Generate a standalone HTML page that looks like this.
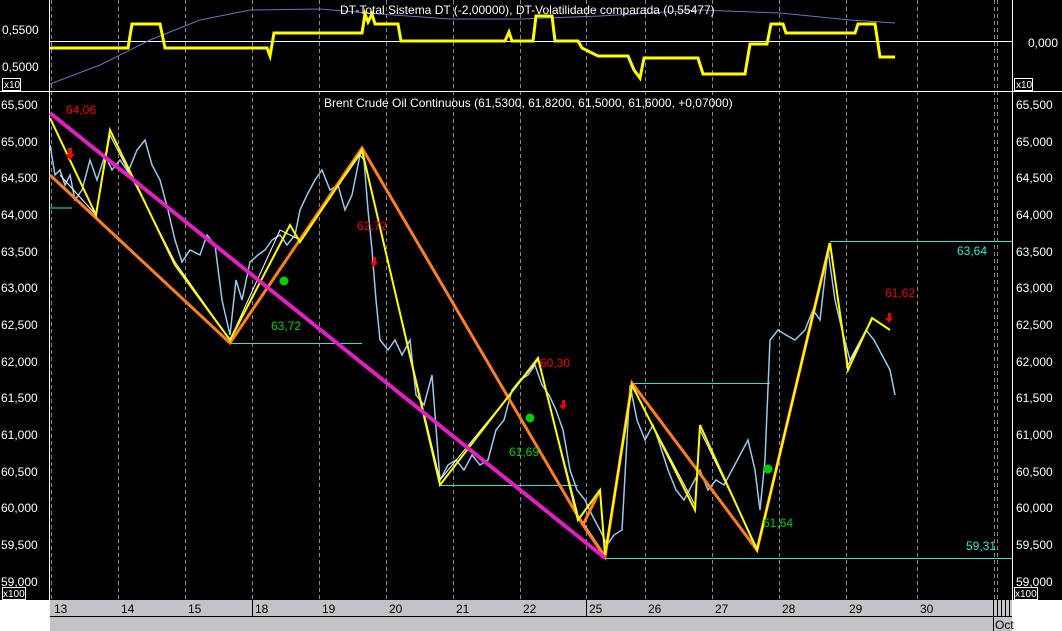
<!DOCTYPE html><html><head><meta charset="utf-8"><style>
body{margin:0;background:#000;width:1062px;height:631px;overflow:hidden;font-family:"Liberation Sans",sans-serif}
svg{display:block}
svg text{font-family:"Liberation Sans",sans-serif;font-size:12px}
</style></head><body>
<svg width="1062" height="631" viewBox="0 0 1062 631" xmlns="http://www.w3.org/2000/svg">
<rect width="1062" height="631" fill="#000"/>
<g stroke="#888" stroke-dasharray="4,3" stroke-width="1">
<line x1="51.5" y1="0" x2="51.5" y2="600"/><line x1="118.5" y1="0" x2="118.5" y2="600"/><line x1="185.5" y1="0" x2="185.5" y2="600"/><line x1="252.5" y1="0" x2="252.5" y2="600"/><line x1="319.5" y1="0" x2="319.5" y2="600"/><line x1="386.5" y1="0" x2="386.5" y2="600"/><line x1="453.5" y1="0" x2="453.5" y2="600"/><line x1="520.5" y1="0" x2="520.5" y2="600"/><line x1="586.5" y1="0" x2="586.5" y2="600"/><line x1="645.5" y1="0" x2="645.5" y2="600"/><line x1="712.5" y1="0" x2="712.5" y2="600"/><line x1="779.5" y1="0" x2="779.5" y2="600"/><line x1="846.5" y1="0" x2="846.5" y2="600"/><line x1="917.5" y1="0" x2="917.5" y2="600"/><line x1="994.5" y1="0" x2="994.5" y2="600"/><line x1="997.5" y1="0" x2="997.5" y2="600"/>
</g>
<g stroke="#fff" stroke-width="1">
<line x1="49.5" y1="0" x2="49.5" y2="600"/><line x1="1012.5" y1="0" x2="1012.5" y2="600"/>
<line x1="0" y1="91.5" x2="1062" y2="91.5"/>
<line x1="50" y1="41.5" x2="1012" y2="41.5"/>
</g>
<polyline fill="none" stroke="#7070c0" stroke-width="1" points="50,84 100,65 150,40 200,20 250,10 320,9 380,14 450,19 520,19 600,16 700,10 780,13 850,20 895,23"/>
<polyline fill="none" stroke="#ff0" stroke-width="3" points="50,48 128,48 132,24 160,24 165,48 267,48 270,56 274,33 362,33 365,14 368,22 372,14 375,24 398,24 401,41 505,41 509,32 512,41 533,41 536,16 552,16 555,41 578,41 582,48 598,56 628,56 634,70 640,78 644,58 698,58 703,74 745,74 750,44 767,44 771,24 783,24 786,33 855,33 858,24 875,24 880,57 895,57"/>
<text x="340" y="14" fill="#fff">DT-Total Sistema DT (-2,00000), DT-Volatilidade comparada (0,55477)</text>
<g stroke="#40e0d0" stroke-width="1">
<line x1="50" y1="208" x2="72" y2="208"/><line x1="230" y1="343.5" x2="362" y2="343.5"/><line x1="440" y1="485.5" x2="578" y2="485.5"/><line x1="605" y1="558.5" x2="1012" y2="558.5"/><line x1="632" y1="383.5" x2="770" y2="383.5"/><line x1="830" y1="241.5" x2="1012" y2="241.5"/>
</g>
<polyline fill="none" stroke="#9cc8e8" stroke-width="1.5" points="50,145 55,175 60,170 65,185 70,175 75,200 82,190 90,160 97,180 105,155 112,170 120,160 128,172 137,150 145,140 152,165 160,180 168,210 175,240 182,262 190,250 200,255 207,235 215,245 222,300 230,335 236,280 242,300 250,262 258,255 265,250 272,240 280,235 287,245 295,235 300,210 307,195 315,180 322,170 330,190 338,185 345,210 352,195 360,155 364,160 368,210 372,250 376,300 380,340 388,350 395,340 402,355 410,340 416,395 424,405 432,375 440,480 448,465 456,460 464,470 472,455 480,465 488,460 496,430 504,420 512,390 520,380 528,375 535,365 542,385 549,395 556,410 563,430 570,470 577,490 585,500 592,515 600,530 607,545 614,535 622,530 630,385 637,420 645,440 653,425 660,445 668,470 676,490 684,500 692,485 700,470 708,490 716,480 724,485 732,470 740,455 748,440 755,470 760,510 765,460 770,340 778,330 786,335 795,340 805,330 813,310 820,320 828,250 835,300 842,330 850,360 858,345 866,330 874,340 882,355 890,370 895,395"/>
<polyline fill="none" stroke="#fff" stroke-width="1" points="60,175 96,215 110,135 175,262 230,340 280,230 300,240 362,152 440,480 538,360 578,515 605,555 632,386 695,505 700,430 757,548 830,245 848,365 872,320"/>
<polyline fill="none" stroke="#ff7f27" stroke-width="3" points="50,175 230,343 362,148 583,525 605,557 632,383 757,550 830,243"/>
<polyline fill="none" stroke="#ff7f27" stroke-width="3" points="583,525 600,490"/>
<polyline fill="none" stroke="#ff0" stroke-width="2" points="50,118 96,215 110,130 175,265 230,340 290,225 300,242 362,150 440,485 538,358 578,520 600,490 605,555 632,385 695,510 700,425 757,550 830,243 848,370 872,318 890,330"/>
<line x1="50" y1="113" x2="605" y2="558" stroke="#e020c0" stroke-width="4"/>
<text x="324" y="107" fill="#fff">Brent Crude Oil Continuous (61,5300, 61,8200, 61,5000, 61,6000, +0,07000)</text>
<text x="66" y="114" fill="#e00">64,06</text>
<text x="271" y="330" fill="#0c0">63,72</text>
<text x="357" y="230" fill="#e00">62,72</text>
<text x="540" y="367" fill="#e00">60,30</text>
<text x="509" y="456" fill="#0c0">61,69</text>
<text x="763" y="527" fill="#0c0">61,64</text>
<text x="957" y="255" fill="#40e0d0">63,64</text>
<text x="885" y="297" fill="#e00">61,62</text>
<text x="966" y="550" fill="#40e0d0">59,31</text>
<g fill="#e00"><path d="M68,148h4v6h3l-5,6l-5,-6h3z"/><path d="M373,257h3v5h2l-4,5l-4,-5h3z"/><path d="M562,400h3v5h2l-4,5l-4,-5h3z"/><path d="M888,313h3v5h2l-4,5l-4,-5h3z"/></g>
<g fill="#0c0"><circle cx="284" cy="281" r="4.5"/><circle cx="530" cy="418" r="4.5"/><circle cx="768" cy="469" r="4.5"/></g>
<g fill="#fff">
<text x="2" y="34">0,5500</text><text x="2" y="71">0,5000</text>
<text x="1028" y="47">0,000</text>
<text x="1" y="109">65,500</text><text x="1" y="146">65,000</text><text x="1" y="182">64,500</text><text x="1" y="219">64,000</text><text x="1" y="256">63,500</text><text x="1" y="292">63,000</text><text x="1" y="329">62,500</text><text x="1" y="366">62,000</text><text x="1" y="402">61,500</text><text x="1" y="439">61,000</text><text x="1" y="476">60,500</text><text x="1" y="512">60,000</text><text x="1" y="549">59,500</text><text x="1" y="586">59,000</text>
<text x="1016" y="109">65,500</text><text x="1016" y="146">65,000</text><text x="1016" y="182">64,500</text><text x="1016" y="219">64,000</text><text x="1016" y="256">63,500</text><text x="1016" y="292">63,000</text><text x="1016" y="329">62,500</text><text x="1016" y="366">62,000</text><text x="1016" y="402">61,500</text><text x="1016" y="439">61,000</text><text x="1016" y="476">60,500</text><text x="1016" y="512">60,000</text><text x="1016" y="549">59,500</text><text x="1016" y="586">59,000</text>
</g>
<g stroke="#fff"><rect x="2.5" y="78.5" width="18" height="12" fill="#000"/><rect x="1014.5" y="78.5" width="18" height="12" fill="#000"/><rect x="2.5" y="587.5" width="23" height="12" fill="#000"/><rect x="1014.5" y="587.5" width="23" height="12" fill="#000"/></g>
<g fill="#fff"><text x="4" y="88" style="font-size:10px">x10</text><text x="1016" y="88" style="font-size:10px">x10</text><text x="3" y="597" style="font-size:10px">x100</text><text x="1015" y="597" style="font-size:10px">x100</text></g>
<rect x="0" y="600" width="50" height="31" fill="#fff"/>
<rect x="1012" y="600" width="50" height="31" fill="#fff"/>
<rect x="50" y="600" width="962" height="31" fill="#c4c2c6"/>
<line x1="50" y1="616.5" x2="1012" y2="616.5" stroke="#000"/>
<g stroke="#000"><line x1="252.5" y1="600" x2="252.5" y2="616"/><line x1="586.5" y1="600" x2="586.5" y2="616"/><line x1="993.5" y1="600" x2="993.5" y2="631"/><line x1="997.5" y1="600" x2="997.5" y2="616"/><line x1="1001.5" y1="600" x2="1001.5" y2="616"/><line x1="1005.5" y1="600" x2="1005.5" y2="616"/><line x1="1009.5" y1="600" x2="1009.5" y2="616"/></g>
<g fill="#000" style="font-size:13px">
<text x="54" y="613">13</text><text x="121" y="613">14</text><text x="188" y="613">15</text><text x="255" y="613">18</text><text x="322" y="613">19</text><text x="389" y="613">20</text><text x="456" y="613">21</text><text x="523" y="613">22</text><text x="589" y="613">25</text><text x="648" y="613">26</text><text x="715" y="613">27</text><text x="782" y="613">28</text><text x="849" y="613">29</text><text x="920" y="613">30</text><text x="995" y="629">Oct</text>
</g>
</svg>
</body></html>
